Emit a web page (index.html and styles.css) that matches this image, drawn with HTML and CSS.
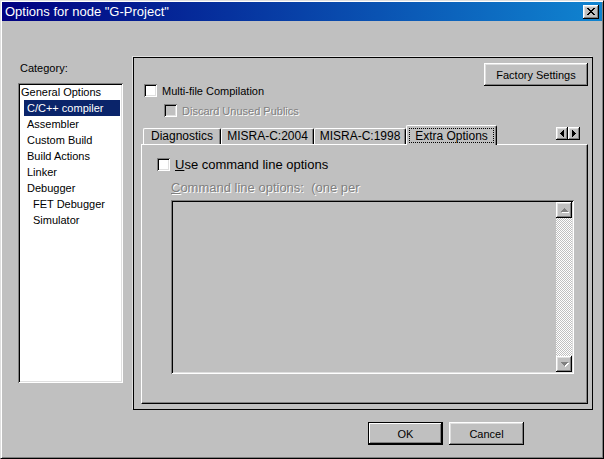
FILE: index.html
```html
<!DOCTYPE html>
<html lang="en">
<head>
  <meta charset="UTF-8">
  <title>Options for node "G-Project"</title>
  <link rel="stylesheet" href="styles.css">
</head>
<body>
  <div class="window">
    <!-- Title bar -->
    <div class="titlebar">
      <span class="title">Options for node "G-Project"</span>
      <span class="close-btn">
        <svg width="8" height="7" viewBox="0 0 8 7" shape-rendering="crispEdges">
          <path d="M0 0h2v1h1v1h2V1h1V0h2v1H7v1H6v1H5v1h1v1h1v1h1v1H6V6H5V5H3v1H2v1H0V6h1V5h1V4h1V3H2V2H1V1H0z" fill="#000"/>
        </svg>
      </span>
    </div>

    <div class="dialog">
      <div class="main">
        <!-- Category list -->
        <div class="category">
          <div class="category-label">Category:</div>
          <ul class="category-list">
            <li>General Options</li>
            <li class="lvl1 selected">C/C++ compiler</li>
            <li class="lvl1">Assembler</li>
            <li class="lvl1">Custom Build</li>
            <li class="lvl1">Build Actions</li>
            <li class="lvl1">Linker</li>
            <li class="lvl1">Debugger</li>
            <li class="lvl2">FET Debugger</li>
            <li class="lvl2">Simulator</li>
          </ul>
        </div>

        <!-- Options panel -->
        <div class="options-panel">
          <div class="panel-top">
            <button class="btn btn-factory">Factory Settings</button>
          </div>
          <div class="check-row multi">
            <span class="checkbox"></span>
            <span>Multi-file Compilation</span>
          </div>
          <div class="check-row discard disabled">
            <span class="checkbox"></span>
            <span class="dim-text">Discard Unused Publics</span>
          </div>

          <div class="tab-area">
            <div class="tab-strip">
              <div class="tab tab-diag">Diagnostics</div>
              <div class="tab tab-misra04">MISRA-C:2004</div>
              <div class="tab tab-misra98">MISRA-C:1998</div>
              <div class="tab tab-extra active"><span class="focus">Extra Options</span></div>
              <div class="tab-scroll">
                <span class="arrow-btn">
                  <svg width="4" height="7" viewBox="0 0 4 7" shape-rendering="crispEdges"><path d="M3 0h1v7H3V6H2V5H1V4H0V3h1V2h1V1h1z" fill="#000"/></svg>
                </span>
                <span class="arrow-btn">
                  <svg width="4" height="7" viewBox="0 0 4 7" shape-rendering="crispEdges"><path d="M0 0h1v1h1v1h1v1h1v1H3v1H2v1H1v1H0z" fill="#000"/></svg>
                </span>
              </div>
            </div>

            <div class="tab-page">
              <div class="check-row use-row">
                <span class="checkbox"></span>
                <span><u>U</u>se command line options</span>
              </div>
              <div class="cmd-label dim-text"><u>C</u>ommand line options:&nbsp; (one per</div>
              <div class="cmd-box">
                <div class="scrollbar">
                  <span class="scroll-btn">
                    <svg width="7" height="4" viewBox="0 0 7 4" shape-rendering="crispEdges"><path d="M3 0h1v1h1v1h1v1h1v1H0V3h1V2h1V1h1z" fill="#808080"/></svg>
                  </span>
                  <span class="scroll-track"></span>
                  <span class="scroll-btn">
                    <svg width="7" height="4" viewBox="0 0 7 4" shape-rendering="crispEdges"><path d="M0 0h7v1H6v1H5v1H4v1H3V3H2V2H1V1H0z" fill="#808080"/></svg>
                  </span>
                </div>
              </div>
            </div>
          </div>
        </div>
      </div>

      <!-- Dialog buttons -->
      <div class="footer">
        <button class="btn btn-default">OK</button>
        <button class="btn">Cancel</button>
      </div>
    </div>
  </div>
</body>
</html>
```

FILE: styles.css
```css
body {
  margin: 0;
  background: #c0c0c0;
  font-family: "Liberation Sans", Arial, sans-serif;
  color: #000;
}
.window {
  width: 604px;
  height: 459px;
  box-sizing: border-box;
  border: 1px solid;
  border-color: #dfdfdf #000 #000 #dfdfdf;
  box-shadow: inset 1px 1px #fff, inset -1px -1px #808080;
  padding: 1px;
  background: #c0c0c0;
  display: flex;
  flex-direction: column;
}

/* Title bar */
.titlebar {
  height: 19px;
  background: linear-gradient(to right, #000080, #1084d0);
  display: flex;
  align-items: center;
  padding: 0 3px 0 3px;
}
.title {
  color: #fff;
  font-size: 13px;
}
.close-btn {
  margin-left: auto;
  width: 16px;
  height: 14px;
  background: #c0c0c0;
  box-shadow: inset -1px -1px #000, inset 1px 1px #fff, inset -2px -2px #808080, inset 2px 2px #dfdfdf;
  display: flex;
  align-items: center;
  justify-content: center;
}

/* Dialog body */
.dialog {
  flex: 1;
  display: flex;
  flex-direction: column;
  padding: 36px 0 0 16px;
}
.main {
  display: flex;
  align-items: flex-start;
}

/* Category list */
.category {
  width: 105px;
  margin-top: 5px;
}
.category-label {
  font-size: 11px;
  line-height: 13px;
  height: 13px;
  margin-bottom: 8px;
  padding-left: 2px;
}
.category-list {
  list-style: none;
  margin: 0;
  padding: 1px 2px 2px;
  height: 300px;
  box-sizing: border-box;
  background: #fff;
  box-shadow: inset 1px 1px #808080, inset -1px -1px #fff, inset 2px 2px #000, inset -2px -2px #dfdfdf;
}
.category-list li {
  height: 16px;
  line-height: 16px;
  font-size: 11px;
  padding-left: 1px;
  white-space: nowrap;
}
.category-list li.lvl1 {
  margin-left: 4px;
  padding-left: 3px;
}
.category-list li.lvl2 {
  margin-left: 10px;
  padding-left: 3px;
}
.category-list li.selected {
  background: #0a246a;
  color: #fff;
  margin-right: 1px;
}

/* Options panel */
.options-panel {
  margin-left: 10px;
  width: 460px;
  height: 353px;
  box-sizing: border-box;
  border: 1px solid #000;
  box-shadow: -1px -1px 0 #dfdfdf;
  display: flex;
  flex-direction: column;
}
.panel-top {
  display: flex;
  justify-content: flex-end;
  padding: 5px 4px 0 0;
}
.btn {
  background: #c0c0c0;
  border: none;
  padding: 0;
  font-family: "Liberation Sans", Arial, sans-serif;
  font-size: 11px;
  color: #000;
  width: 75px;
  height: 23px;
  box-shadow: inset -1px -1px #000, inset 1px 1px #fff, inset -2px -2px #808080, inset 2px 2px #dfdfdf;
}
.btn-factory {
  width: 104px;
}
.btn-default {
  box-shadow: inset 0 0 0 1px #000, inset -2px -2px #000, inset 2px 2px #fff, inset -3px -3px #808080;
}

.check-row {
  display: flex;
  align-items: center;
  height: 13px;
  font-size: 11px;
  gap: 5px;
  white-space: nowrap;
}
.checkbox {
  width: 13px;
  height: 13px;
  flex: none;
  box-sizing: border-box;
  background: #fff;
  box-shadow: inset 1px 1px #808080, inset -1px -1px #fff, inset 2px 2px #000, inset -2px -2px #dfdfdf;
}
.disabled .checkbox {
  background: #c0c0c0;
}
.dim-text {
  color: #808080;
  text-shadow: 1px 1px 0 #fff;
}
.multi {
  margin-top: -2px;
  padding-left: 10px;
}
.discard {
  margin-top: 7px;
  padding-left: 30px;
}

/* Tabs */
.tab-area {
  flex: 1;
  display: flex;
  flex-direction: column;
  margin: 8px 4px 5px 7px;
}
.tab-strip {
  display: flex;
  align-items: flex-end;
  height: 19px;
  padding-left: 2px;
}
.tab {
  height: 16px;
  box-sizing: border-box;
  font-size: 12px;
  line-height: 15px;
  text-align: center;
  white-space: nowrap;
  border-top: 1px solid #fff;
  border-left: 1px solid #fff;
  border-right: 1px solid #000;
  border-radius: 2px 2px 0 0;
  box-shadow: inset -1px 0 #808080;
  background: #c0c0c0;
}
.tab-diag { width: 78px; }
.tab-misra04 { width: 93px; }
.tab-misra98 { width: 92px; }
.tab-extra { width: 91px; }
.tab.active {
  height: 20px;
  margin-bottom: -1px;
  position: relative;
  z-index: 1;
  padding: 2px 2px 1px;
}
.focus {
  display: block;
  height: 15px;
  line-height: 14px;
  border: 1px dotted #000;
  box-sizing: border-box;
}
.tab-scroll {
  margin-left: auto;
  margin-right: 8px;
  align-self: flex-start;
  margin-top: 2px;
  display: flex;
}
.arrow-btn {
  width: 12px;
  height: 13px;
  background: #c0c0c0;
  box-shadow: inset -1px -1px #000, inset 1px 1px #fff, inset -2px -2px #808080, inset 2px 2px #dfdfdf;
  display: flex;
  align-items: center;
  justify-content: center;
}

.tab-page {
  flex: 1;
  border-top: 1px solid #fff;
  border-left: 1px solid #fff;
  border-right: 1px solid #000;
  border-bottom: 1px solid #000;
  box-shadow: inset -1px -1px #808080;
  padding: 13px 0 0 15px;
}
.use-row {
  font-size: 13px;
}
.cmd-label {
  margin: 10px 0 5px 14px;
  font-size: 13px;
  line-height: 14px;
  height: 14px;
}
.cmd-box {
  margin-left: 14px;
  width: 403px;
  height: 174px;
  box-sizing: border-box;
  padding: 2px;
  box-shadow: inset 1px 1px #808080, inset -1px -1px #fff, inset 2px 2px #000, inset -2px -2px #dfdfdf;
  display: flex;
  justify-content: flex-end;
}
.scrollbar {
  width: 16px;
  display: flex;
  flex-direction: column;
}
.scroll-btn {
  width: 16px;
  height: 16px;
  flex: none;
  background: #c0c0c0;
  box-shadow: inset -1px -1px #000, inset 1px 1px #fff, inset -2px -2px #808080, inset 2px 2px #dfdfdf;
  display: flex;
  align-items: center;
  justify-content: center;
}
.scroll-btn svg {
  filter: drop-shadow(1px 1px 0 #fff);
}
.scroll-track {
  flex: 1;
  background-color: #c0c0c0;
  background-image: conic-gradient(#fff 25%, #c0c0c0 0 50%, #fff 0 75%, #c0c0c0 0);
  background-size: 2px 2px;
}

/* Dialog buttons */
.footer {
  display: flex;
  justify-content: flex-end;
  gap: 6px;
  padding: 12px 78px 0 0;
}
```
